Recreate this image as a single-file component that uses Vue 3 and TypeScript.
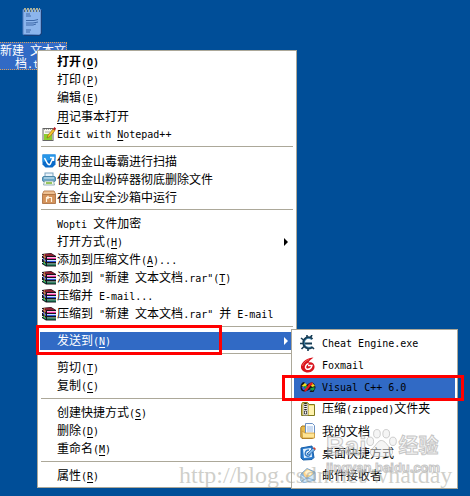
<script setup lang="ts">
interface Segment {
  text: string
  latin: boolean
  key: boolean
}
interface Item {
  label: string
  icon?: string
  bold?: boolean
  arrow?: boolean
  active?: boolean
}

// An ampersand marks the accelerator letter that follows it.
const groups: Item[][] = [
  [
    { label: '打开(&O)', bold: true },
    { label: '打印(&P)' },
    { label: '编辑(&E)' },
    { label: '&用记事本打开' },
    { label: 'Edit with &Notepad++', icon: 'notepad' },
  ],
  [
    { label: '使用金山毒霸进行扫描', icon: 'shield' },
    { label: '使用金山粉碎器彻底删除文件', icon: 'shredder' },
    { label: '在金山安全沙箱中运行', icon: 'sandbox' },
  ],
  [
    { label: 'Wopti 文件加密' },
    { label: '打开方式(&H)', arrow: true },
    { label: '添加到压缩文件(&A)...', icon: 'rar' },
    { label: '添加到 "新建 文本文档.rar"(&T)', icon: 'rar' },
    { label: '压缩并 E-mail...', icon: 'rar' },
    { label: '压缩到 "新建 文本文档.rar" 并 E-mail', icon: 'rar' },
  ],
  [{ label: '发送到(&N)', arrow: true, active: true }],
  [{ label: '剪切(&T)' }, { label: '复制(&C)' }],
  [{ label: '创建快捷方式(&S)' }, { label: '删除(&D)' }, { label: '重命名(&M)' }],
  [{ label: '属性(&R)' }],
]

const targets: Item[] = [
  { label: 'Cheat Engine.exe', icon: 'cheat' },
  { label: 'Foxmail', icon: 'foxmail' },
  { label: 'Visual C++ 6.0', icon: 'vc', active: true },
  { label: '压缩(zipped)文件夹', icon: 'zip' },
  { label: '我的文档', icon: 'docs' },
  { label: '桌面快捷方式', icon: 'shortcut' },
  { label: '邮件接收者', icon: 'mail' },
]

function segments(label: string): Segment[] {
  const parts = label.match(/&.|[\x20-\x25\x27-\x7e]+|[^\x20-\x7e]+/g) ?? []
  return parts.map((part) => {
    const key = part.startsWith('&')
    const text = key ? part.slice(1) : part
    return { text, key, latin: text.charCodeAt(0) < 127 }
  })
}
</script>

<template>
  <main class="desktop">
    <svg class="defs" aria-hidden="true">
      <symbol id="notepad" viewBox="0 0 14 14">
        <rect x="1" y="1.5" width="10" height="12" fill="#f8f8f0" stroke="#666" />
        <rect x="2" y="7" width="8" height="6" fill="#8ccf2f" />
        <path d="M2 2h8" stroke="#555" stroke-dasharray="1 1" />
        <path d="M3 5h5" stroke="#aaa" />
        <path d="M5 11l1-3 5-6 2 1.500-5 6z" fill="#f5c22b" stroke="#8a5a10" stroke-width=".6" />
        <path d="M11 2l1.500-2L14 1.500 13 3.500z" fill="#b3131b" />
      </symbol>
      <symbol id="shield" viewBox="0 0 14 14">
        <path d="M.5.5h13v10l-3 3h-7l-3-3z" fill="#0a6bc9" />
        <path d="M.5.5h13v4L.5 8z" fill="#2796e8" />
        <path d="M2.500 4l3 5.500c1 1.500 2.500 1.500 3 0L11 4M8 3.500h3.500V7" fill="none" stroke="#fff" stroke-width="1.500" />
      </symbol>
      <symbol id="shredder" viewBox="0 0 14 14">
        <rect x="3" y="1" width="8" height="4" fill="#e8f3fb" stroke="#7aa3bf" />
        <rect x=".5" y="4.500" width="13" height="5" rx="1.500" fill="#6ba7c9" stroke="#4c87a8" />
        <path d="M2 6h10" stroke="#d9eef8" />
        <path d="M2.500 9h9l1 4h-11z" fill="#f3fae9" stroke="#7d9fae" stroke-width=".8" />
        <path d="M4 11h6" stroke="#78b52f" stroke-width="1.500" />
      </symbol>
      <symbol id="sandbox" viewBox="0 0 14 14">
        <path d="M2 1h10l1.500 3v9.500H.5V4z" fill="#d4935a" stroke="#a4683a" stroke-width=".8" />
        <path d="M2 1.500h10l1 2.500H1z" fill="#edc092" />
        <path d="M1 4.500h12" stroke="#b07443" />
        <path d="M4.500 12V7.500h5V12M6.500 6L5 7.500 6.500 9" fill="none" stroke="#fff2df" stroke-width="1.200" />
      </symbol>
      <symbol id="rar" viewBox="0 0 14 14">
        <path d="M0 1l9-1 5 3v10.500H4L0 11z" fill="#14141c" />
        <path d="M1 1L9 .5 13 3H4z" fill="#8d1f30" />
        <path d="M0 2h1v1H0zM0 5h1v1H0zM0 9h1v1H0z" fill="#ddd" />
        <path d="M1 2l3 1.500v2L1 4z" fill="#b4455a" />
        <path d="M5 4h9v1H5z" fill="#ffb8e4" />
        <path d="M5 5h9v1H5z" fill="#e8389c" />
        <path d="M1 5l3 2v2L1 7z" fill="#5461e0" />
        <path d="M5 7h9v1H5z" fill="#c9e2ff" />
        <path d="M5 8h9v1H5z" fill="#2f58dc" />
        <path d="M1 8.500l3 2v2l-3-2z" fill="#199a63" />
        <path d="M5 10.500h9v1H5z" fill="#c4f5dc" />
        <path d="M5 11.500h9v1H5z" fill="#0c8a58" />
        <path d="M2.500 1.500v10" stroke="#e3d33c" stroke-dasharray="1 1" />
      </symbol>
      <symbol id="cheat" viewBox="0 0 16 16">
        <path d="M12.500 4C8 .5 3 3.500 3.500 8.500c.5 5 6 6 9 3.500M4 8.500h8" fill="none" stroke="#163c55" stroke-width="2.200" />
        <path d="M7 3V0M3.500 5L1 3M3 8.500H0M4 11.500L1.500 14M8 13v3M12 12l2 2M10.500 2.500L12 0" stroke="#163c55" stroke-width="1.600" />
        <path d="M11.500 4.500C8 2 4.500 4 4.500 8c0 3 3 5 6.500 4" fill="none" stroke="#3b8ab5" stroke-width=".8" />
      </symbol>
      <symbol id="foxmail" viewBox="0 0 16 16">
        <path d="M13.500.5C8 1 2 4 1 9c-.5 4 3 6.500 7 6.500s7-3 6.500-6.500c-.5-3-3-4.500-6-3.500 1-2 3-3.500 5-5z" fill="#d9141d" />
        <path d="M8 8.500h4c-.5 3-3.500 4.500-5.500 3.500-2-1.200-1-4.500 2-5.500" fill="none" stroke="#fff" stroke-width="1.500" />
        <path d="M2.500 9C3 6 6 3.500 9 2.500" fill="none" stroke="#f76c65" stroke-width=".8" />
      </symbol>
      <symbol id="vc" viewBox="0 0 16 16">
        <path d="M4.500 3C2 3 .5 5 .5 8s1.500 4.500 4 4.500c3 0 5-2.500 7-2.500l-2 3h4L15.500 9c0-3-1.500-5.500-4-5.500-3 0-4 3-7 3z" fill="#151515" />
        <path d="M1.500 7L5 4l2 2-3 2z" fill="#f5df1e" />
        <path d="M1.500 8l2.500-.5 2 3.500H3z" fill="#315ae0" />
        <path d="M4 7h3v3.500L5 11z" fill="#14a447" />
        <path d="M10 5l2.500-1L15 7l-3 1z" fill="#f5df1e" />
        <path d="M10 9.500L14.500 8v2.500L12 12z" fill="#1e9e44" />
        <path d="M4.500 11.500c3 0 4-7 8-7" fill="none" stroke="#e21a22" stroke-width="2.400" />
      </symbol>
      <symbol id="zip" viewBox="0 0 16 16">
        <path d="M1.500 3.500l1-2h5l1.500 2h5.500v11h-13z" fill="#f2df70" stroke="#817b1c" />
        <path d="M9 5h5v9H9z" fill="#fff2ae" />
        <path d="M3 3h5v11.500H3z" fill="#eee" stroke="#77723e" stroke-width=".6" />
        <path d="M5.500 2v12" stroke="#222" stroke-width="2.500" stroke-dasharray="1 1" />
        <path d="M4.500 10h2v3h-2z" fill="#fff" stroke="#222" stroke-width=".7" />
      </symbol>
      <symbol id="docs" viewBox="0 0 16 16">
        <path d="M.8 4.500L2 3h3l1 1.500 8 1v9L12.500 15.500H2L.8 14z" fill="#e7b84a" stroke="#a87a24" />
        <path d="M5.500.5h7l2 2v9h-9z" fill="#f8fcff" stroke="#6c91c4" />
        <path d="M7 4h6M7 6h6M7 8h6" stroke="#9ab8e3" />
        <path d="M2 8l3 2h9.500v5H2.500z" fill="#ffe493" stroke="#c89635" stroke-width=".8" />
      </symbol>
      <symbol id="shortcut" viewBox="0 0 16 16">
        <path d="M1 3l11-2 2 11.500-2 2L3 15l-2-2z" fill="#2679cd" stroke="#185fa8" />
        <path d="M3 4l8-1 1 9-8 1z" fill="#e6f4ff" />
        <path d="M9 5c-4 0-5 5-2 6s4-2 2-3l-2 1" fill="none" stroke="#347dc9" stroke-width="1.400" />
        <path d="M7 9l6-6 2 2-6 5z" fill="#7fb8ec" stroke="#134d91" stroke-width=".6" />
        <path d="M13 3l1-1 2 2-1 1z" fill="#d6422d" />
      </symbol>
      <symbol id="mail" viewBox="0 0 16 16">
        <path d="M1 7l6-5.500L15 5v8L4 15.500 1 14z" fill="#8eb9e2" stroke="#7099bf" stroke-width=".8" />
        <path d="M3 6l4-4 6 3-1 5-7 1z" fill="#ffd58a" />
        <path d="M5 5l3-2 4 2-1 3H6z" fill="#fff3cf" />
        <path d="M1 7.500l6 4L15 6v7L4 15.500 1 14z" fill="#d2e9fb" stroke="#84b0d6" stroke-width=".7" />
        <path d="M1.500 14L7 11l7.500 2" fill="none" stroke="#6a9ac8" stroke-width=".7" />
      </symbol>
    </svg>

    <a class="file" href="#file">
      <svg class="file-icon" viewBox="0 0 20 30" aria-hidden="true">
        <path d="M1 2.500h18V26l-2 2-16-.5z" fill="#8cb5ec" stroke="#527fc0" />
        <path d="M19.500 3v24l-2 1.500H2" fill="none" stroke="#173f79" />
        <path d="M2 3h16" stroke="#a9b29b" stroke-width="4" stroke-dasharray="2 1" />
        <path d="M2 4h16" stroke="#46678f" stroke-width="2" stroke-dasharray="1 2" />
        <path d="M4 7h4M4 9h5M4 13.500h8l4-1M4 16h7l5-1M4 18h7l3-1M4 23h5M4 25h4" fill="none" stroke="#3e69a9" />
      </svg>
      <span class="file-name">
        <span v-for="line in ['新建 文本文', '档.txt']" :key="line" class="file-line"><span
            v-for="(s, i) in segments(line)" :key="i" :class="{ latin: s.latin }">{{ s.text }}</span></span>
      </span>
    </a>

    <nav class="menu main-menu" aria-label="文件">
      <ul v-for="(group, g) in groups" :key="g" class="group">
        <li v-for="item in group" :key="item.label">
          <button type="button" class="item" :class="{ bold: item.bold, active: item.active }">
            <span class="icon-slot">
              <svg v-if="item.icon" class="icon" aria-hidden="true"><use :href="'#' + item.icon" /></svg>
            </span>
            <span class="label"><span
                v-for="(s, i) in segments(item.label)" :key="i" :class="{ latin: s.latin, key: s.key }">{{ s.text }}</span></span>
            <svg v-if="item.arrow" class="arrow" viewBox="0 0 4 8" aria-hidden="true"><path d="M0 0l4 4-4 4z" /></svg>
          </button>
        </li>
      </ul>
    </nav>

    <nav class="menu send-menu" aria-label="发送到">
      <ul class="group">
        <li v-for="item in targets" :key="item.label">
          <button type="button" class="item" :class="{ active: item.active }">
            <svg class="icon" aria-hidden="true"><use :href="'#' + item.icon" /></svg>
            <span class="label"><span
                v-for="(s, i) in segments(item.label)" :key="i" :class="{ latin: s.latin }">{{ s.text }}</span></span>
          </button>
        </li>
      </ul>
    </nav>

    <span class="blog">http://blog.csdn.net/whatday</span>
    <div class="brand">
      <div class="brand-row">
        <span class="brand-name">Bai</span>
        <svg class="paw" viewBox="0 0 38 34" aria-hidden="true">
          <ellipse cx="5" cy="15" rx="4" ry="5" />
          <ellipse cx="13" cy="6" rx="4" ry="5" />
          <ellipse cx="24" cy="6" rx="4" ry="5" />
          <ellipse cx="32" cy="15" rx="4" ry="5" />
          <path d="M18 14c5 0 7 6 11 9 5 4 2 10-3 10H11c-6 0-8-6-3-10 4-3 6-9 10-9z" />
        </svg>
        <span class="brand-cn">经验</span>
      </div>
      <span class="brand-site">jingyan.baidu.com</span>
    </div>

    <div class="mark mark-send"></div>
    <div class="mark mark-target"></div>
  </main>
</template>

<style>
body {
  margin: 0;
  background: #004e98;
}
</style>

<style scoped>
.desktop {
  position: relative;
  min-height: 100vh;
  overflow: hidden;
  background: #004e98;
  font-family: "Noto Sans CJK SC", sans-serif;
  font-size: 12px;
  color: #000;
}
.defs {
  position: absolute;
  width: 0;
  height: 0;
}
.latin {
  font-family: "DejaVu Sans Mono", monospace;
  font-size: 10px;
}
.key {
  text-decoration: underline;
  text-underline-offset: 2px;
}

.file {
  position: absolute;
  left: 0;
  top: 7px;
  display: flex;
  flex-direction: column;
  align-items: center;
  gap: 5px;
  color: #fff;
  text-decoration: none;
}
.file-icon {
  width: 20px;
  height: 30px;
  margin-right: 4px;
}
.file-name {
  box-sizing: border-box;
  width: 67px;
  border: 1px dotted #d9a05c;
  border-left: 0;
  background: #316ac5;
}
.file-line {
  display: block;
  height: 13px;
  line-height: 13px;
  text-align: center;
  white-space: pre;
}

.menu {
  position: absolute;
  box-sizing: border-box;
  padding: 2px;
  border: 1px solid #aca899;
  background: #fff;
}
.main-menu {
  left: 37px;
  top: 50px;
  width: 260px;
}
.send-menu {
  left: 291px;
  top: 329px;
  width: 167px;
}
.group {
  margin: 0;
  padding: 0;
  list-style: none;
}
.group + .group::before {
  content: "";
  display: block;
  height: 1px;
  margin: 3px 1px 5px;
  background: #aca899;
}
.item {
  display: flex;
  align-items: center;
  width: 100%;
  height: 18px;
  padding: 0 6px 0 2px;
  border: 0;
  gap: 1px;
  background: transparent;
  color: #000;
  font: inherit;
  line-height: 18px;
  text-align: left;
}
.item.bold {
  font-weight: 700;
}
.main-menu .active {
  background: #316ac5;
  color: #fff;
}
.icon-slot {
  flex: none;
  width: 14px;
  height: 14px;
}
.icon {
  display: block;
  width: 14px;
  height: 14px;
}
.label {
  flex: 1;
  white-space: pre;
}
.arrow {
  width: 4px;
  height: 8px;
  fill: currentColor;
}
.send-menu .item {
  height: 22px;
  gap: 6px;
  padding: 0 6px;
}
.send-menu .icon {
  flex: none;
  width: 16px;
  height: 16px;
}
.send-menu .active {
  background: #316ac5;
}

.blog {
  position: absolute;
  left: 179px;
  top: 463px;
  font: 24px/24px "Liberation Serif", serif;
  color: rgba(160, 160, 150, 0.5);
  white-space: nowrap;
}
.brand {
  position: absolute;
  left: 326px;
  top: 422px;
  color: rgba(235, 235, 235, 0.5);
  font-family: "Liberation Sans", "Noto Sans CJK SC", sans-serif;
  font-weight: 700;
  white-space: nowrap;
  -webkit-text-stroke: 1px rgba(175, 175, 175, 0.7);
}
.brand-row {
  display: flex;
  align-items: flex-end;
  height: 38px;
}
.brand-name {
  font-size: 26px;
  line-height: 28px;
}
.paw {
  width: 32px;
  height: 34px;
  fill: rgba(235, 235, 235, 0.5);
  stroke: rgba(175, 175, 175, 0.7);
}
.brand-cn {
  font-size: 20px;
  line-height: 28px;
}
.brand-site {
  display: block;
  font-size: 13px;
  line-height: 16px;
}

.mark {
  position: absolute;
  box-sizing: border-box;
  border: 3px solid #f00;
  pointer-events: none;
}
.mark-send {
  left: 36px;
  top: 325px;
  width: 186px;
  height: 30px;
}
.mark-target {
  left: 282px;
  top: 375px;
  width: 182px;
  height: 26px;
}
</style>
